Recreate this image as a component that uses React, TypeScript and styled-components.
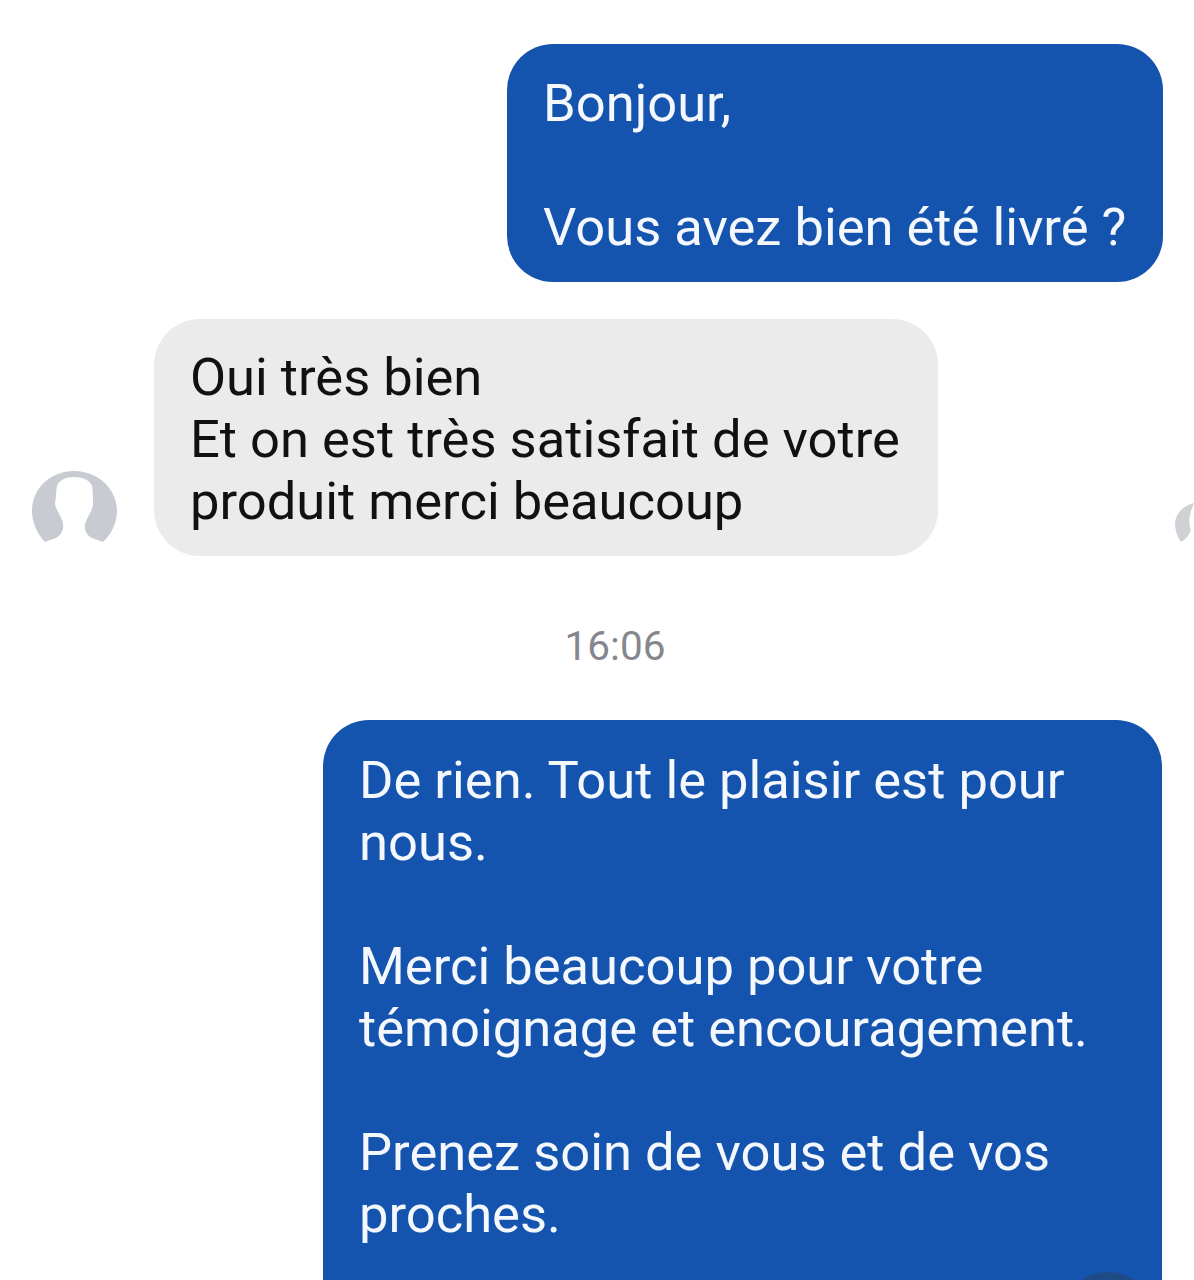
import React from 'react'
import styled, { createGlobalStyle } from 'styled-components'

const GlobalStyle = createGlobalStyle`
  html, body {
    margin: 0;
    padding: 0;
    background: #fff;
  }
`

const Page = styled.div`
  width: 1194px;
  height: 1280px;
  overflow: hidden;
  padding-top: 44px;
  box-sizing: border-box;
  font-family: Roboto, 'Liberation Sans', sans-serif;
  font-size: 52.5px;
  line-height: 62px;
`

const Row = styled.div<{ $end?: number; $gap?: number }>`
  display: flex;
  align-items: flex-end;
  justify-content: ${(p) => (p.$end ? 'flex-end' : 'flex-start')};
  padding-right: ${(p) => p.$end || 0}px;
  margin-bottom: ${(p) => p.$gap || 0}px;
`

const Bubble = styled.div<{ $mine?: boolean; $width: number; $top: number; $bottom: number }>`
  position: relative;
  box-sizing: border-box;
  flex: none;
  width: ${(p) => p.$width}px;
  padding: ${(p) => p.$top}px 20px ${(p) => p.$bottom}px 36px;
  border-radius: 46px;
  background: ${(p) => (p.$mine ? '#1554ae' : '#ebebec')};
  color: ${(p) => (p.$mine ? '#f4f8fd' : '#111113')};
`

const Line = styled.div`
  white-space: nowrap;
  min-height: 62px;
`

const Avatar = styled.svg`
  flex: none;
  width: 85px;
  height: 76px;
  margin: 0 37px 10px 32px;
`

const Peek = styled.svg`
  flex: none;
  width: 19px;
  height: 42px;
  margin: 0 0 11px auto;
`

const Time = styled.div`
  text-align: center;
  color: #85878c;
  font-size: 40.5px;
  line-height: 46px;
  margin: 67px 0 51px 36px;
`

const ScrollDot = styled.div`
  position: absolute;
  left: 737px;
  top: 552px;
  width: 96px;
  height: 96px;
  border-radius: 50%;
  background: #1e4a85;
`

export default function App() {
  return (
    <Page>
      <GlobalStyle />
      <Row $end={31} $gap={37}>
        <Bubble $mine $width={656} $top={28} $bottom={24}>
          <Line>Bonjour,</Line>
          <Line />
          <Line>Vous avez bien été livré ?</Line>
        </Bubble>
      </Row>
      <Row>
        <Avatar viewBox="0 0 85 76">
          <path
            fill="#c9cbd2"
            d="M13 72C5 64 0 52 0 41 0 18 19 1 42 1c23 0 43 17 43 40 0 11-5 23-14 31l-11-4c-5-2-8-8-7-14 2-7 7-12 8-19 0-7 0-13-1-19-2-6-10-9-18-9s-15 3-17 9c-1 6-1 12-2 17 1 9 8 14 8 22 1 6-3 11-7 13z"
          />
        </Avatar>
        <Bubble $width={784} $top={27} $bottom={24}>
          <Line>Oui très bien</Line>
          <Line>Et on est très satisfait de votre</Line>
          <Line>produit merci beaucoup</Line>
        </Bubble>
        <Peek viewBox="0 0 19 42">
          <path fill="#d0d1d5" d="M19 0C8 3 1 10 0 20c0 8 3 15 6 19 4-2 8-7 10-12-3-7-2-15 3-27z" />
        </Peek>
      </Row>
      <Time>16:06</Time>
      <Row $end={32}>
        <Bubble $mine $width={839} $top={29} $bottom={29}>
          <Line>De rien. Tout le plaisir est pour</Line>
          <Line>nous.</Line>
          <Line />
          <Line>Merci beaucoup pour votre</Line>
          <Line>témoignage et encouragement.</Line>
          <Line />
          <Line>Prenez soin de vous et de vos</Line>
          <Line>proches.</Line>
          <Line />
          <ScrollDot />
        </Bubble>
      </Row>
    </Page>
  )
}
